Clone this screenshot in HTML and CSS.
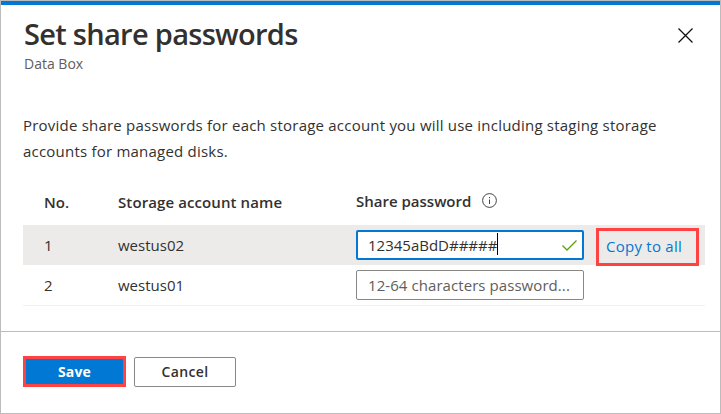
FILE: index.html
```html
<!DOCTYPE html>
<html lang="en">
<head>
<meta charset="utf-8">
<title>Set share passwords</title>
<link rel="stylesheet" href="styles.css">
</head>
<body>
<main class="panel">
  <header class="header">
    <div class="titles">
      <h1>Set share passwords</h1>
      <p class="subtitle">Data Box</p>
    </div>
    <svg class="close" viewBox="0 0 15 15"><path d="M.5 .5L14.5 14.5M14.5 .5L.5 14.5"/></svg>
  </header>
  <p class="intro">Provide share passwords for each storage account you will use including staging storage<br>accounts for managed disks.</p>
  <section class="table">
    <div class="row head">
      <span class="no">No.</span><span class="account">Storage account name</span>
      <span class="password">Share password
        <svg class="info" viewBox="0 0 15 15"><circle cx="7.5" cy="7.5" r="6.9"/><path d="M7.5 6.5v4.5M7.5 4v1.2"/></svg>
      </span>
    </div>
    <div class="row selected">
      <span class="no">1</span><span class="account">westus02</span>
      <div class="field active"><span class="value">12345aBdD#####</span><i class="caret"></i>
        <svg class="check" viewBox="0 0 15 11"><path d="M.5 5.5L5 10L14.5 .5"/></svg>
      </div>
      <a class="copy">Copy to all</a>
    </div>
    <div class="row last">
      <span class="no">2</span><span class="account">westus01</span>
      <div class="field"><span class="placeholder">12-64 characters password...</span></div>
    </div>
  </section>
  <footer class="footer">
    <button class="btn save">Save</button>
    <button class="btn cancel">Cancel</button>
  </footer>
</main>
</body>
</html>
```
FILE: styles.css
```css
* { box-sizing: border-box; }
body { margin: 0; font: 15px/26px "Open Sans", "Noto Sans", sans-serif; color: #323130; }
.panel { width: 721px; height: 414px; border: 1px solid #bcbcbc; background: #fff; display: flex; flex-direction: column; box-shadow: inset 0 4px #0078d4; }
.header { height: 111px; padding: 12px 27px 0 23px; display: flex; justify-content: space-between; }
h1 { margin: 0; font-size: 29px; line-height: 42px; font-weight: 550; letter-spacing: -0.7px; white-space: nowrap; }
.subtitle { margin: 0; font-size: 14px; line-height: 18px; color: #605e5c; }
.close { width: 15px; height: 15px; margin-top: 15px; fill: none; stroke: #111; stroke-width: 1.3; }
.intro { margin: 0; padding-left: 22px; height: 66px; white-space: nowrap; letter-spacing: 0.215px; }
.table { margin: 0 15px 0 22px; height: 153px; }
.row { display: flex; align-items: center; height: 40px; padding-left: 21px; white-space: nowrap; }
.row > * { flex-shrink: 0; }
.head { height: 47px; font-weight: 600; letter-spacing: 0.1px; }
.no { width: 74px; }
.account { width: 238px; }
.password { display: flex; align-items: center; margin-bottom: 2px; letter-spacing: 0; }
.info { width: 15px; height: 15px; margin-left: 11px; fill: none; stroke: #444; }
.selected { background: #edebe9; }
.last { height: 41px; border-bottom: 1px solid #f0f0f0; }
.field { width: 228px; height: 30px; border: 1px solid #8a8886; border-radius: 2px; background: #fff; display: flex; align-items: center; padding: 0 11px; }
.active { border: 2px solid #0078d4; padding: 0 5px 0 10px; }
.caret { width: 1px; height: 22px; margin-bottom: 3px; background: #000; }
.check { width: 15px; height: 11px; margin-left: auto; fill: none; stroke: #57a300; stroke-width: 1.3; }
.placeholder { color: #605e5c; letter-spacing: 0.07px; }
.copy { width: 103px; height: 38px; margin: 4px 0 0 12px; padding: 0 0 2px 7px; border: 3px solid #ff4343; color: #0078d4; letter-spacing: 0.25px; display: flex; align-items: center; }
.footer { border-top: 1px solid #bcbcbc; flex: 1; padding: 24px 22px; display: flex; gap: 8px; }
.btn { width: 102px; height: 30px; margin-top: 1px; font: 600 14px/20px "Open Sans", sans-serif; letter-spacing: 0.4px; padding: 0; border: 1px solid #8a8886; border-radius: 2px; background: #fff; color: #323130; }
.save { width: 103px; height: 31px; margin-top: 0; background: #0078d4; color: #fff; border: 3px solid #ff4343; border-radius: 0; font-weight: 700; letter-spacing: 0.2px; }
```
